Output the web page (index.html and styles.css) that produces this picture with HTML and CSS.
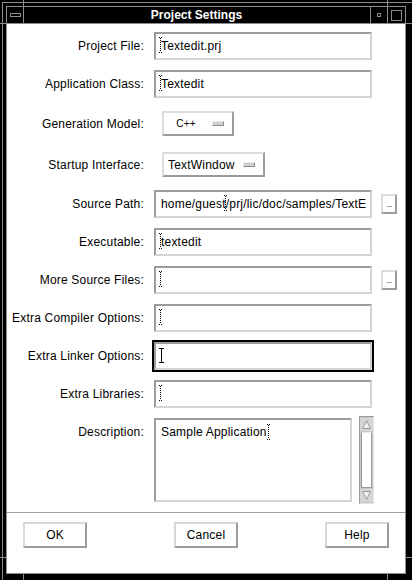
FILE: index.html
```html
<!DOCTYPE html>
<html>
<head>
<meta charset="utf-8">
<link rel="stylesheet" href="styles.css">
</head>
<body>
<div class="frame">
  <div class="bevel">
    <div class="window">
      <div class="titlebar">
        <div class="tb-btn tb-menu"><span class="ico-menu"></span></div>
        <div class="title">Project Settings</div>
        <div class="tb-btn tb-min"><span class="ico-min"></span></div>
        <div class="tb-btn tb-max"><span class="ico-max"></span></div>
      </div>
      <div class="client">
        <div class="form">
          <div class="lbl">Project File:</div>
          <div class="ctl"><div class="tf"><div class="tf-in"><span class="caret"><svg width="3" height="16" viewBox="0 0 3 16"><path d="M0 0h1v1H0zM2 0h1v1H2zM1 1h1v1H1zM1 3h1v1H1zM1 5h1v1H1zM1 7h1v1H1zM1 9h1v1H1zM1 11h1v1H1zM1 13h1v1H1zM0 15h1v1H0zM2 15h1v1H2z" fill="#000"/></svg></span>Textedit.prj</div></div></div>

          <div class="lbl">Application Class:</div>
          <div class="ctl"><div class="tf"><div class="tf-in"><span class="caret"><svg width="3" height="16" viewBox="0 0 3 16"><path d="M0 0h1v1H0zM2 0h1v1H2zM1 1h1v1H1zM1 3h1v1H1zM1 5h1v1H1zM1 7h1v1H1zM1 9h1v1H1zM1 11h1v1H1zM1 13h1v1H1zM0 15h1v1H0zM2 15h1v1H2z" fill="#000"/></svg></span>Textedit</div></div></div>

          <div class="lbl">Generation Model:</div>
          <div class="ctl"><div class="opt opt-cpp"><span class="opt-lbl">C++</span><span class="ind"></span></div></div>

          <div class="lbl">Startup Interface:</div>
          <div class="ctl"><div class="opt"><span class="opt-lbl">TextWindow</span><span class="ind"></span></div></div>

          <div class="lbl">Source Path:</div>
          <div class="ctl"><div class="tf"><div class="tf-in">home/guest<span class="caret"><svg width="3" height="16" viewBox="0 0 3 16"><path d="M0 0h1v1H0zM2 0h1v1H2zM1 1h1v1H1zM1 3h1v1H1zM1 5h1v1H1zM1 7h1v1H1zM1 9h1v1H1zM1 11h1v1H1zM1 13h1v1H1zM0 15h1v1H0zM2 15h1v1H2z" fill="#000"/></svg></span>/prj/lic/doc/samples/TextE</div></div></div>
          <div class="more">...</div>

          <div class="lbl">Executable:</div>
          <div class="ctl"><div class="tf"><div class="tf-in"><span class="caret"><svg width="3" height="16" viewBox="0 0 3 16"><path d="M0 0h1v1H0zM2 0h1v1H2zM1 1h1v1H1zM1 3h1v1H1zM1 5h1v1H1zM1 7h1v1H1zM1 9h1v1H1zM1 11h1v1H1zM1 13h1v1H1zM0 15h1v1H0zM2 15h1v1H2z" fill="#000"/></svg></span>textedit</div></div></div>

          <div class="lbl">More Source Files:</div>
          <div class="ctl"><div class="tf"><div class="tf-in"><span class="caret"><svg width="3" height="16" viewBox="0 0 3 16"><path d="M0 0h1v1H0zM2 0h1v1H2zM1 1h1v1H1zM1 3h1v1H1zM1 5h1v1H1zM1 7h1v1H1zM1 9h1v1H1zM1 11h1v1H1zM1 13h1v1H1zM0 15h1v1H0zM2 15h1v1H2z" fill="#000"/></svg></span></div></div></div>
          <div class="more">...</div>

          <div class="lbl">Extra Compiler Options:</div>
          <div class="ctl"><div class="tf"><div class="tf-in"><span class="caret"><svg width="3" height="16" viewBox="0 0 3 16"><path d="M0 0h1v1H0zM2 0h1v1H2zM1 1h1v1H1zM1 3h1v1H1zM1 5h1v1H1zM1 7h1v1H1zM1 9h1v1H1zM1 11h1v1H1zM1 13h1v1H1zM0 15h1v1H0zM2 15h1v1H2z" fill="#000"/></svg></span></div></div></div>

          <div class="lbl">Extra Linker Options:</div>
          <div class="ctl"><div class="tf focus"><div class="tf-in"><span class="caret caret-solid"><svg width="5" height="15" viewBox="0 0 5 15"><path d="M0 0h5v1H0zM2 1h1v13H2zM0 14h5v1H0z" fill="#000"/></svg></span></div></div></div>

          <div class="lbl">Extra Libraries:</div>
          <div class="ctl"><div class="tf"><div class="tf-in"><span class="caret"><svg width="3" height="16" viewBox="0 0 3 16"><path d="M0 0h1v1H0zM2 0h1v1H2zM1 1h1v1H1zM1 3h1v1H1zM1 5h1v1H1zM1 7h1v1H1zM1 9h1v1H1zM1 11h1v1H1zM1 13h1v1H1zM0 15h1v1H0zM2 15h1v1H2z" fill="#000"/></svg></span></div></div></div>

          <div class="lbl lbl-top">Description:</div>
          <div class="ctl desc">
            <div class="tf ta"><div class="tf-in ta-in">Sample Application<span class="caret"><svg width="3" height="16" viewBox="0 0 3 16"><path d="M0 0h1v1H0zM2 0h1v1H2zM1 1h1v1H1zM1 3h1v1H1zM1 5h1v1H1zM1 7h1v1H1zM1 9h1v1H1zM1 11h1v1H1zM1 13h1v1H1zM0 15h1v1H0zM2 15h1v1H2z" fill="#000"/></svg></span></div></div>
            <div class="sb">
              <div class="sb-arrow"><svg width="11" height="11" viewBox="0 0 11 11"><path d="M5.5 1.5L9.5 9.5H1.5Z" fill="#ececec" stroke="#9a9a9a" stroke-width="1"/></svg></div>
              <div class="sb-slider"></div>
              <div class="sb-arrow"><svg width="11" height="11" viewBox="0 0 11 11"><path d="M5.5 9.5L9.5 1.5H1.5Z" fill="#ececec" stroke="#9a9a9a" stroke-width="1"/></svg></div>
            </div>
          </div>
        </div>
        <div class="sep"></div>
        <div class="actions">
          <div class="btn">OK</div>
          <div class="btn">Cancel</div>
          <div class="btn">Help</div>
        </div>
      </div>
    </div>
  </div>
  <span class="tick tv t-top t-l"></span>
  <span class="tick tv t-top t-r"></span>
  <span class="tick tv t-bot t-l"></span>
  <span class="tick tv t-bot t-r"></span>
  <span class="tick th t-lft t-u"></span>
  <span class="tick th t-rgt t-u"></span>
  <span class="tick th t-lft t-d"></span>
  <span class="tick th t-rgt t-d"></span>
</div>
</body>
</html>
```

FILE: styles.css
```css
* { box-sizing: border-box; }
html, body { margin: 0; padding: 0; background: #000; }
body {
  font-family: "Liberation Sans", Arial, sans-serif;
  font-size: 12px;
  letter-spacing: 0.2px;
  color: #000;
}
.frame {
  position: relative;
  width: 412px;
  height: 580px;
  background: #000;
  padding: 2px 0 0 2px;
}
.bevel {
  width: 410px;
  height: 578px;
  border-top: 1px solid #8c8c8c;
  border-left: 1px solid #8c8c8c;
  padding: 3px 6px 6px 3px;
}
.window {
  width: 400px;
  height: 568px;
  border: 1px solid #8c8c8c;
  display: flex;
  flex-direction: column;
}
.titlebar {
  height: 17px;
  border-bottom: 1px solid #8c8c8c;
  background: #000;
  display: flex;
}
.tb-btn {
  display: flex;
  align-items: center;
  justify-content: center;
  height: 16px;
}
.tb-menu { width: 17px; border-right: 1px solid #8c8c8c; }
.tb-min { width: 18px; border-left: 1px solid #8c8c8c; border-right: 1px solid #8c8c8c; }
.tb-max { width: 17px; }
.ico-menu { width: 11px; height: 4px; border: 1px solid #8c8c8c; }
.ico-min { width: 4px; height: 4px; border: 1px solid #8c8c8c; }
.ico-max { width: 11px; height: 11px; border: 1px solid #8c8c8c; }
.title {
  flex: 1;
  color: #fff;
  font-weight: bold;
  font-size: 12px;
  letter-spacing: 0;
  line-height: 16px;
  text-align: center;
  padding-right: 1px;
}
.client {
  flex: 1;
  background: #fff;
  padding-top: 6px;
}
.form {
  display: grid;
  grid-template-columns: 145px 227px 20px;
  grid-template-rows: 32px 32px 35px 35px 32px 32px 32px 32px 32px 32px 88px;
  row-gap: 6px;
}
.lbl {
  grid-column: 1;
  align-self: center;
  text-align: right;
  padding-right: 8px;
  line-height: 16px;
  white-space: nowrap;
}
.lbl-top { align-self: start; padding-top: 8px; }
.ctl {
  grid-column: 2;
  align-self: center;
  display: flex;
  align-items: center;
}
.tf {
  width: 222px;
  height: 32px;
  border: 2px solid transparent;
}
.tf.focus { border-color: #000; }
.tf-in {
  position: relative;
  height: 28px;
  border: 2px solid;
  border-color: #9c9c9c #d4d4d4 #d4d4d4 #9c9c9c;
  padding-left: 5px;
  padding-right: 4px;
  line-height: 24px;
  white-space: nowrap;
  overflow: hidden;
}
.caret {
  position: relative;
  display: inline-block;
  width: 0;
  height: 16px;
  vertical-align: top;
}
.caret svg {
  position: absolute;
  left: -2px;
  top: 3px;
  display: block;
}
.caret-solid svg { left: -2px; top: 4px; }
.opt {
  margin-left: 10px;
  display: inline-flex;
  align-items: center;
  height: 25px;
  border: 2px solid;
  border-color: #dcdcdc #9c9c9c #9c9c9c #dcdcdc;
  padding: 0 8px 0 4px;
  gap: 8px;
  background: #fff;
}
.opt-lbl { white-space: nowrap; line-height: 16px; }
.opt-cpp .opt-lbl { width: 36px; text-align: center; font-size: 10px; }
.ind {
  width: 12px;
  height: 5px;
  border: 1px solid;
  border-color: #ececec #8c8c8c #8c8c8c #ececec;
  background: #d0d0d0;
}
.more {
  grid-column: 3;
  align-self: center;
  margin-left: 2px;
  width: 16px;
  height: 20px;
  border: 2px solid;
  border-color: #dcdcdc #9c9c9c #9c9c9c #dcdcdc;
  font-size: 8px;
  line-height: 9px;
  display: flex;
  align-items: flex-end;
  justify-content: center;
  padding-bottom: 3px;
  letter-spacing: -0.5px;
  overflow: hidden;
}
.desc {
  align-self: start;
  align-items: flex-start;
}
.ta { width: 202px; height: 88px; }
.ta-in {
  height: 84px;
  line-height: 16px;
  padding-top: 4px;
  white-space: normal;
}
.ta-in .caret svg { left: 0px; top: 0px; }
.sb {
  margin-left: 5px;
  width: 15px;
  height: 88px;
  border: 1px solid;
  border-color: #9a9a9a #e4e4e4 #e4e4e4 #9a9a9a;
  background: #c8c8c8;
  display: flex;
  flex-direction: column;
  align-items: center;
  padding: 1px 0;
}
.sb-arrow {
  width: 13px;
  height: 13px;
  display: flex;
  align-items: center;
  justify-content: center;
  background: #d6d6d6;
}
.sb-slider {
  flex: 1;
  width: 11px;
  margin: 1px 0;
  background: #fff;
  border: 1px solid;
  border-color: #e8e8e8 #9a9a9a #9a9a9a #9a9a9a;
}
.sep {
  margin-top: 8px;
  border-top: 1px solid #a0a0a0;
}
.actions {
  margin-top: 9px;
  padding: 0 16px;
  display: flex;
  justify-content: space-between;
}
.btn {
  width: 64px;
  height: 26px;
  border: 2px solid;
  border-color: #d8d8d8 #9c9c9c #9c9c9c #d8d8d8;
  display: flex;
  align-items: center;
  justify-content: center;
  line-height: 16px;
}
.tick { position: absolute; background: #8c8c8c; }
.tv { width: 1px; height: 6px; }
.th { width: 6px; height: 1px; }
.t-top { top: 0; }
.t-bot { bottom: 0; }
.tv.t-l { left: 23px; }
.tv.t-r { left: 387px; }
.t-lft { left: 0; }
.t-rgt { right: 0; }
.th.t-u { top: 23px; }
.th.t-d { top: 557px; }
```
